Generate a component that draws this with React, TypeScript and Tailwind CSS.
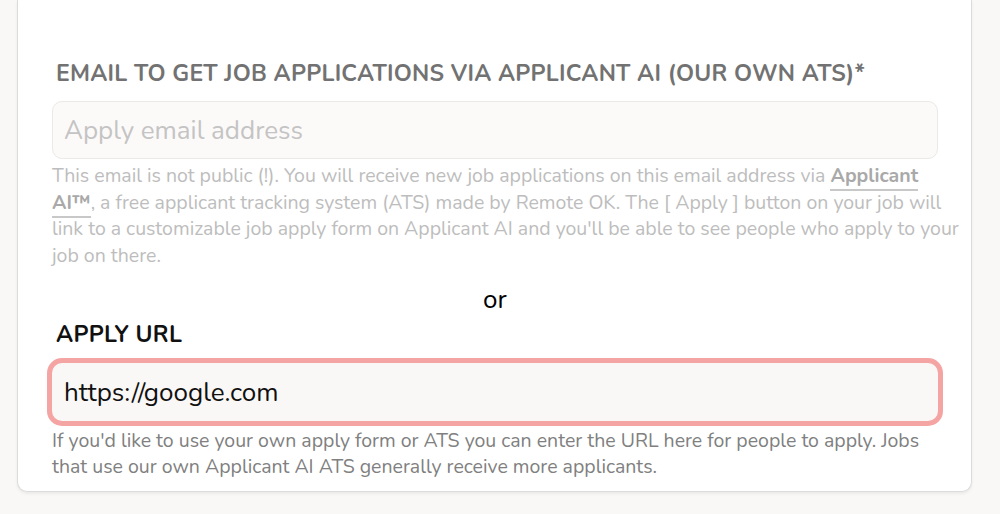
import React from "react";

export default function App() {
  const font = { fontFamily: '"Nunito", "Lato", "Open Sans", sans-serif' };
  return (
    <div className="w-[1000px] h-[514px] bg-[#f9f8f6] pl-[17px] overflow-hidden" style={font}>
      <div className="w-[955px] bg-white border-x border-b border-[#dcdcdc] rounded-b-[10px] shadow-[0_2px_3px_rgba(0,0,0,0.06)] pl-[34px] pr-[33px] pt-[61px] pb-[11px]">
        <div className="text-[23px] leading-[26px] font-bold uppercase text-[#727272] pl-[4px] whitespace-nowrap tracking-[0.25px]">
          Email to get job applications via Applicant AI (our own ATS)*
        </div>
        <div className="mt-[14px] h-[58px] rounded-[10px] border border-[#ebe9e7] bg-[#fcfaf9] flex items-center px-[11px] text-[26px] text-[#c4c4c4]">
          Apply email address
        </div>
        <div className="mt-[4px] text-[19.5px] leading-[26.5px] text-[#bdbdbd] whitespace-nowrap">
          This email is not public (!). You will receive new job applications on this email address via{" "}
          <span className="font-bold text-[#a9a9a9] border-b-2 border-[#c8c8c8]">Applicant</span>
          <br />
          <span className="font-bold text-[#a9a9a9] border-b-2 border-[#c8c8c8]">AI™</span>, a free applicant tracking system (ATS) made by Remote OK. The [ Apply ] button on your job will
          <br />
          link to a customizable job apply form on Applicant AI and you'll be able to see people who apply to your
          <br />
          job on there.
        </div>
        <div className="mt-[17px] text-center text-[26px] leading-[28px] text-black">or</div>
        <div className="mt-[8px] pl-[4px] text-[23px] leading-[26px] font-bold uppercase text-[#111] tracking-[0.3px]">Apply URL</div>
        <div className="mt-[15px] h-[58px] rounded-[10px] bg-[#faf8f6] ring-[5px] ring-[#f4a4a2] flex items-center px-[12px] text-[26px] text-[#111]">
          https://google.com
        </div>
        <div className="mt-[7px] text-[19.5px] leading-[26px] text-[#808080] whitespace-nowrap">
          If you'd like to use your own apply form or ATS you can enter the URL here for people to apply. Jobs
          <br />
          that use our own Applicant AI ATS generally receive more applicants.
        </div>
      </div>
    </div>
  );
}
